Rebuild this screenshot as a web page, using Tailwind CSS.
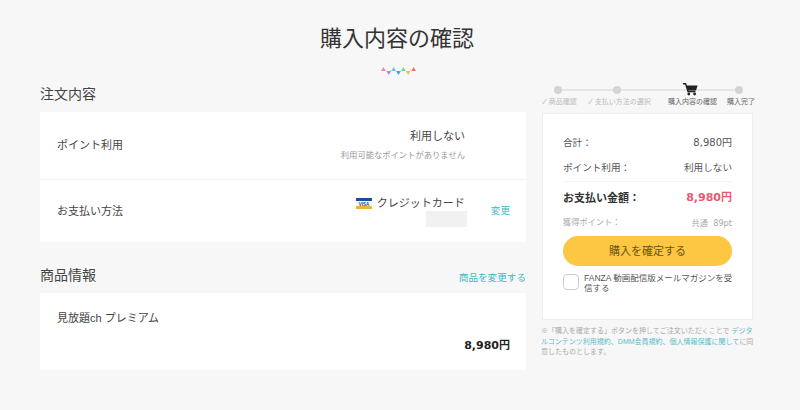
<!DOCTYPE html>
<html lang="ja">
<head>
<meta charset="UTF-8" />
<title>購入内容の確認</title>
<script src="https://cdn.jsdelivr.net/npm/@tailwindcss/browser@4"></script>
</head>
<body class="bg-[#f7f7f7] text-[#333] font-['Liberation_Sans','Noto_Sans_CJK_JP',sans-serif] h-[410px] overflow-hidden">
<h1 class="pt-[23px] pr-[6px] text-center text-[22px] leading-[32px] text-[#333]">購入内容の確認</h1>

<!-- 飾り -->
<div class="mt-[12px] h-[8px] pr-[4px] flex justify-center">
    <svg width="35" height="8" viewBox="0 0 36 8">
        <polygon points="0,4 2.5,0 5,4" fill="#ee82c8"/>
        <polygon points="5.5,4 10.5,4 8,8" fill="#a98ae6"/>
        <polygon points="10.5,4 13,0 15.5,4" fill="#6cc6dc"/>
        <polygon points="15.5,4 20.5,4 18,8" fill="#3fa6d8"/>
        <polygon points="20.5,4 23,0 25.5,4" fill="#72d88e"/>
        <polygon points="25.5,4 30.5,4 28,8" fill="#f5c04a"/>
        <polygon points="31,4 33.5,0 36,4" fill="#f0795f"/>
    </svg>
</div>

<div class="mt-[7px] flex items-start pl-[40px] gap-[15px]">
    <!-- 左カラム -->
    <main class="w-[486px]">
        <h2 class="text-[14px] leading-[20px] pt-[2px] text-[#444]">注文内容</h2>
        <section class="mt-[8px] bg-white">
            <div class="h-[68px] border-b border-[#f3f3f3] flex items-center justify-between pl-[17px] pr-[61px]">
                <span class="text-[11px] text-[#444]">ポイント利用</span>
                <div class="text-right mb-[2px]">
                    <p class="text-[11px] leading-[16px] text-[#444]">利用しない</p>
                    <p class="mt-[5px] text-[8.3px] leading-[12px] text-[#999]">利用可能なポイントがありません</p>
                </div>
            </div>
            <div class="h-[62px] flex items-center pl-[17px] pr-[16px]">
                <span class="text-[11px] text-[#444]">お支払い方法</span>
                <div class="ml-auto w-[111px]">
                    <div class="flex items-center justify-end gap-[5px] whitespace-nowrap -ml-[12px] mr-[2px]">
                        <svg width="16" height="11" viewBox="0 0 16 11">
                            <rect width="16" height="3" fill="#1a4f92"/>
                            <rect y="3" width="16" height="5" fill="#f4f4f4"/>
                            <rect y="8" width="16" height="3" fill="#eeb32f"/>
                            <text x="8" y="7.6" text-anchor="middle" font-size="4.5" font-weight="700" font-family="Liberation Sans" fill="#1a4f92">VISA</text>
                        </svg>
                        <span class="text-[11px] leading-[16px] text-[#444]">クレジットカード</span>
                    </div>
                    <div class="ml-[70px] w-[41px] h-[16px] bg-[#f1f1f1]"></div>
                </div>
                <a class="ml-[24px] text-[9.6px] text-[#3cb8c4]">変更</a>
            </div>
        </section>

        <div class="mt-[23px] flex items-end justify-between">
            <h2 class="text-[14px] leading-[20px] text-[#444]">商品情報</h2>
            <a class="text-[9.6px] leading-[14px] text-[#3cb8c4]">商品を変更する</a>
        </div>
        <section class="mt-[8px] bg-white h-[77px] pl-[17px] pr-[16px] pt-[17px]">
            <p class="text-[11px] leading-[16px] text-[#444]">見放題ch プレミアム</p>
            <p class="mt-[12px] text-right text-[11px] leading-[16px] font-bold text-[#222] font-['DejaVu_Sans','Noto_Sans_CJK_JP',sans-serif]">8,980円</p>
        </section>
    </main>

    <!-- 右カラム -->
    <aside class="w-[213px]">
        <!-- ステップ -->
        <div class="relative h-[25px]">
            <div class="absolute left-[17px] right-[14px] top-[7px] h-[2px] bg-[#e6e6e6]"></div>
            <span class="absolute left-[13px] top-[4px] w-[8px] h-[8px] rounded-full bg-[#d4d4d4]"></span>
            <span class="absolute left-[72px] top-[4px] w-[8px] h-[8px] rounded-full bg-[#d4d4d4]"></span>
            <svg class="absolute left-[142px] top-[1px]" width="15" height="13" viewBox="0 0 15 13">
                <path d="M0 .8h2.6l2.4 7.7h7.4" fill="none" stroke="#222" stroke-width="1.4"/>
                <path d="M3.4 2.6H14.6L13 7.4H4.8z" fill="#222"/>
                <circle cx="5.8" cy="11" r="1.4" fill="#222"/>
                <circle cx="11.6" cy="11" r="1.4" fill="#222"/>
            </svg>
            <span class="absolute left-[194px] top-[4px] w-[8px] h-[8px] rounded-full bg-[#d4d4d4]"></span>
            <div class="absolute left-0 right-0 top-[15px] text-[7px] leading-[10px] text-[#bbb]">
                <span class="absolute left-[1px] whitespace-nowrap">✓ 商品確認</span>
                <span class="absolute left-[47px] whitespace-nowrap">✓ 支払い方法の選択</span>
                <span class="absolute left-[127px] whitespace-nowrap text-[#666]">購入内容の確認</span>
                <span class="absolute left-[186px] whitespace-nowrap text-[#666]">購入完了</span>
            </div>
        </div>

        <!-- 合計 -->
        <section class="mt-[6px] mx-[1px] h-[207px] bg-white border border-[#eee] px-[20px] pt-[21px]">
            <div class="flex justify-between items-center text-[9.6px] leading-[16px] text-[#555]">
                <span>合計：</span><span class="text-[10px] font-['DejaVu_Sans','Noto_Sans_CJK_JP',sans-serif]">8,980円</span>
            </div>
            <div class="mt-[9px] flex justify-between text-[9.6px] leading-[16px] text-[#555]">
                <span>ポイント利用：</span><span>利用しない</span>
            </div>
            <div class="mt-[5px] pt-[6px] border-t border-[#f3f3f3] flex justify-between items-center leading-[20px]">
                <span class="text-[11px] font-bold text-[#333]">お支払い金額：</span>
                <span class="text-[11px] font-bold text-[#e8586f] font-['DejaVu_Sans','Noto_Sans_CJK_JP',sans-serif]">8,980円</span>
            </div>
            <div class="mt-[9px] flex justify-between items-center text-[8.2px] leading-[12px] text-[#aaa]">
                <span>獲得ポイント：</span><span class="font-['DejaVu_Sans','Noto_Sans_CJK_JP',sans-serif]">共通&nbsp;&nbsp;89pt</span>
            </div>
            <button class="mt-[7px] w-full h-[30px] rounded-full bg-[#fdc643] text-[11px] text-[#6b5417]">購入を確定する</button>
            <label class="mt-[7px] flex items-start gap-[5px]">
                <span class="mt-[1px] w-[16px] h-[16px] shrink-0 rounded-[4px] border border-[#ccc] bg-white"></span>
                <span class="-mr-[3px] text-[8.5px] leading-[10px] text-[#555]">FANZA 動画配信版メールマガジンを受信する</span>
            </label>
        </section>

        <p class="mt-[6px] text-[7px] leading-[10.5px] text-[#aaa]">※「購入を確定する」ボタンを押してご注文いただくことで <a class="text-[#5cbccc]">デジタルコンテンツ利用規約、DMM会員規約、個人情報保護に関して</a>に同意したものとします。</p>
    </aside>
</div>
</body>
</html>
